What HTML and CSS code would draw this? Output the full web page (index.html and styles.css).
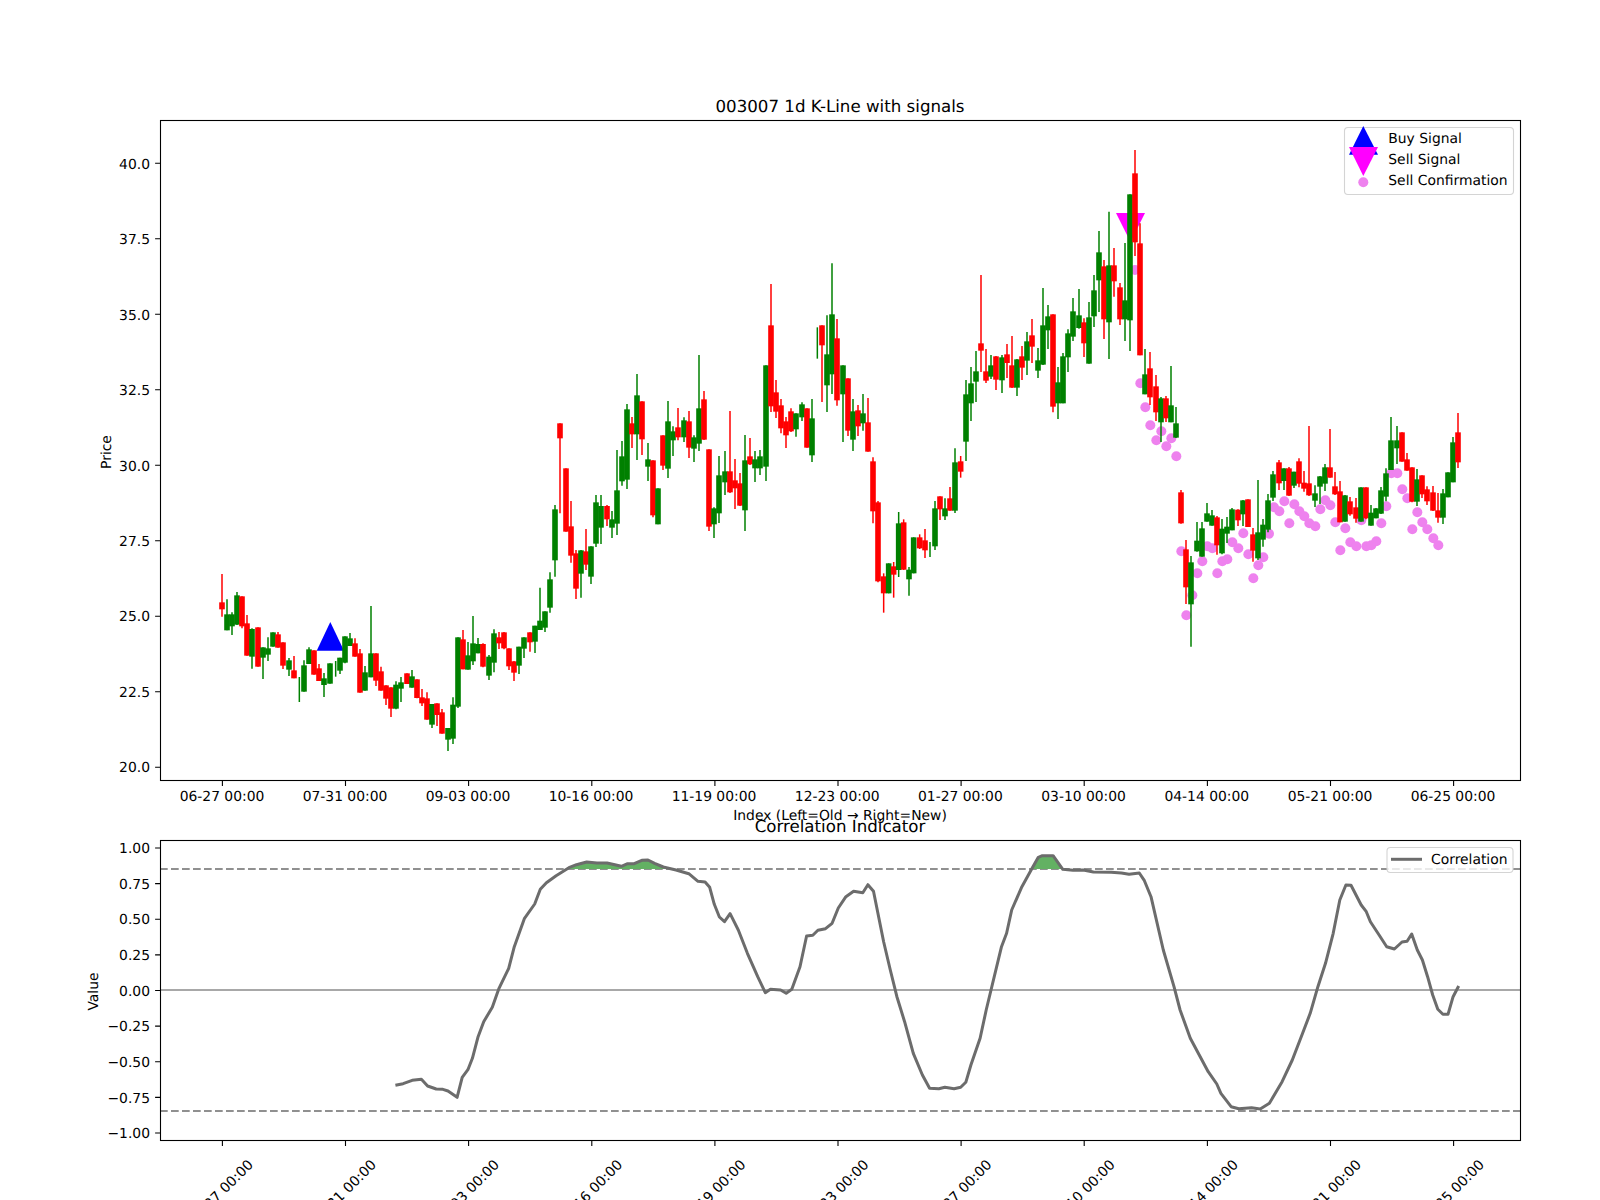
FILE: index.html
```html
<!DOCTYPE html>
<html lang="en">
<head>
<meta charset="utf-8">
<title>003007 1d K-Line with signals</title>
<link rel="stylesheet" href="styles.css">
</head>
<body>
<svg class="figure" id="figure" xmlns="http://www.w3.org/2000/svg" width="1600" height="1200" viewBox="0 0 1600 1200">
  <g id="main-markers">
    <polygon class="buy" points="330.3,622 316.7,650.7 344,650.7"/>
    <polygon class="sell" points="1116,213 1145,213 1130.5,242"/>
  </g>
  <g id="main-dots"></g>
  <g id="main-candles"></g>

  <rect class="frame" x="160.5" y="120.5" width="1360" height="660"/>
  <g class="ticks">
    <path d="M155.1 163.3h5M155.1 238.8h5M155.1 314.3h5M155.1 389.8h5M155.1 465.3h5M155.1 540.8h5M155.1 616.3h5M155.1 691.8h5M155.1 767.3h5"/>
    <path d="M222.4 781v5M345.5 781v5M468.6 781v5M591.8 781v5M714.9 781v5M838 781v5M961.1 781v5M1084.2 781v5M1207.4 781v5M1330.5 781v5M1453.6 781v5"/>
  </g>
  <g class="label end">
    <text x="150" y="168.8">40.0</text>
    <text x="150" y="244.2">37.5</text>
    <text x="150" y="319.7">35.0</text>
    <text x="150" y="395">32.5</text>
    <text x="150" y="470.5">30.0</text>
    <text x="150" y="546">27.5</text>
    <text x="150" y="621.3">25.0</text>
    <text x="150" y="696.8">22.5</text>
    <text x="150" y="772.3">20.0</text>
  </g>
  <g class="label middle">
    <text x="222" y="801">06-27 00:00</text>
    <text x="345" y="801">07-31 00:00</text>
    <text x="468" y="801">09-03 00:00</text>
    <text x="591" y="801">10-16 00:00</text>
    <text x="714" y="801">11-19 00:00</text>
    <text x="837.2" y="801">12-23 00:00</text>
    <text x="960.4" y="801">01-27 00:00</text>
    <text x="1083.6" y="801">03-10 00:00</text>
    <text x="1206.8" y="801">04-14 00:00</text>
    <text x="1330" y="801">05-21 00:00</text>
    <text x="1453" y="801">06-25 00:00</text>
    <text x="840" y="820">Index (Left=Old → Right=New)</text>
    <text x="111" y="452" transform="rotate(-90 111 452)">Price</text>
    <text x="98" y="991.5" transform="rotate(-90 98 991.5)">Value</text>
  </g>
  <g class="title middle">
    <text x="840" y="111.5">003007 1d K-Line with signals</text>
    <text x="840" y="832">Correlation Indicator</text>
  </g>

  <g class="legend">
    <rect class="legend-box" x="1344.5" y="127.5" width="169" height="67" rx="3.5"/>
    <polygon class="buy" points="1363.3,126 1349,154.7 1378,154.7"/>
    <polygon class="sell" points="1349,147 1378,147 1363.3,176"/>
    <circle class="dot" cx="1363.3" cy="182.3" r="5"/>
    <g class="label">
      <text x="1388.3" y="143.3">Buy Signal</text>
      <text x="1388.3" y="164.3">Sell Signal</text>
      <text x="1388.3" y="185.3">Sell Confirmation</text>
    </g>
  </g>

  <line class="zero" x1="160" y1="990" x2="1520" y2="990"/>
  <line class="dash" x1="160" y1="869" x2="1520" y2="869"/>
  <line class="dash" x1="160" y1="1111" x2="1520" y2="1111"/>
  <g id="corr"></g>

  <rect class="frame" x="160.5" y="840.5" width="1360" height="300"/>
  <g class="ticks">
    <path d="M155.1 848h5M155.1 883.6h5M155.1 919.3h5M155.1 954.9h5M155.1 990.5h5M155.1 1026.1h5M155.1 1061.8h5M155.1 1097.4h5M155.1 1133h5"/>
    <path d="M222.4 1141v5M345.5 1141v5M468.6 1141v5M591.8 1141v5M714.9 1141v5M838 1141v5M961.1 1141v5M1084.2 1141v5M1207.4 1141v5M1330.5 1141v5M1453.6 1141v5"/>
  </g>
  <g class="label end">
    <text x="150" y="853">1.00</text>
    <text x="150" y="888.6">0.75</text>
    <text x="150" y="924.3">0.50</text>
    <text x="150" y="959.9">0.25</text>
    <text x="150" y="995.5">0.00</text>
    <text x="150" y="1031.1">−0.25</text>
    <text x="150" y="1067.2">−0.50</text>
    <text x="150" y="1103">−0.75</text>
    <text x="150" y="1138.2">−1.00</text>
  </g>
  <g class="label middle">
    <text x="220.4" y="1197" transform="rotate(-45 220.4 1192)">06-27 00:00</text>
    <text x="343.5" y="1197" transform="rotate(-45 343.5 1192)">07-31 00:00</text>
    <text x="466.6" y="1197" transform="rotate(-45 466.6 1192)">09-03 00:00</text>
    <text x="589.8" y="1197" transform="rotate(-45 589.8 1192)">10-16 00:00</text>
    <text x="712.9" y="1197" transform="rotate(-45 712.9 1192)">11-19 00:00</text>
    <text x="836" y="1197" transform="rotate(-45 836 1192)">12-23 00:00</text>
    <text x="959.1" y="1197" transform="rotate(-45 959.1 1192)">01-27 00:00</text>
    <text x="1082.2" y="1197" transform="rotate(-45 1082.2 1192)">03-10 00:00</text>
    <text x="1205.4" y="1197" transform="rotate(-45 1205.4 1192)">04-14 00:00</text>
    <text x="1328.5" y="1197" transform="rotate(-45 1328.5 1192)">05-21 00:00</text>
    <text x="1451.6" y="1197" transform="rotate(-45 1451.6 1192)">06-25 00:00</text>
  </g>

  <g class="legend">
    <rect class="legend-box" x="1387" y="847.5" width="126" height="25" rx="3.5"/>
    <line class="corr-line" x1="1391" y1="859.3" x2="1422" y2="859.3"/>
    <text class="label" x="1431" y="864.3">Correlation</text>
  </g>
</svg>
<script src="chart.js"></script>
</body>
</html>
```

FILE: styles.css
```css
html, body {
  margin: 0;
  padding: 0;
  background: #ffffff;
}

.figure {
  display: block;
  width: 1600px;
  height: 1200px;
  background: #ffffff;
}

.figure text {
  font-family: "DejaVu Sans", sans-serif;
  fill: #000000;
  text-rendering: geometricPrecision;
}

.label text,
text.label {
  font-size: 13.89px;
}

.title text {
  font-size: 16.67px;
}

.end text {
  text-anchor: end;
}

.middle text {
  text-anchor: middle;
}

.frame {
  fill: none;
  stroke: #000000;
  stroke-width: 1.1;
}

.ticks path {
  fill: none;
  stroke: #000000;
  stroke-width: 1.1;
}

.legend-box {
  fill: rgba(255, 255, 255, 0.8);
  stroke: #d4d4d4;
  stroke-width: 1.1;
}

.buy {
  fill: #0000ff;
}

.sell {
  fill: #ff00ff;
}

.dot {
  fill: #ee82ee;
}

.wick-r {
  stroke: #ff0000;
  stroke-width: 1.5;
}

.wick-g {
  stroke: #008000;
  stroke-width: 1.5;
}

.body-r {
  fill: #ff0000;
}

.body-g {
  fill: #008000;
}

.zero {
  stroke: #a8a8a8;
  stroke-width: 2.2;
}

.dash {
  stroke: #909090;
  stroke-width: 2;
  stroke-dasharray: 7.7 3.3;
}

.corr-line {
  fill: none;
  stroke: #6c6c6c;
  stroke-width: 3;
  stroke-linejoin: round;
}

.corr-fill {
  fill: #63b163;
}
```

FILE: chart.js
```js
(function () {
  var NS = "http://www.w3.org/2000/svg";

  function el(parent, name, cls, attrs) {
    var n = document.createElementNS(NS, name);
    if (cls) n.setAttribute("class", cls);
    for (var k in attrs) n.setAttribute(k, attrs[k]);
    parent.appendChild(n);
    return n;
  }

  // Candles: [x, colour, wickTop, bodyTop, bodyBottom, wickBottom], read in 3x crop coordinates.
  var groups = [
    { ox: 160, oy: 480, rows: [
      [186,"r",282,367,388,410],[201,"g",358,403,451,451],[216,"g",397,403,439,465],[231,"g",336,346,434,435],
      [246,"r",349,349,439,445],[261,"r",405,430,527,527],[276,"g",445,447,530,566],[294,"r",442,442,560,560],
      [309,"g",502,502,533,597],[324,"g",472,505,524,543],[339,"g",457,457,500,500],[354,"r",456,463,503,503],
      [369,"r",487,487,557,567],[387,"g",534,541,569,588],[402,"r",528,571,595,595],[418,"g",591,591,591,666],
      [432,"g",541,556,635,635],[447,"g",502,508,552,552],[462,"r",511,511,584,584],[477,"r",552,565,603,603],
      [492,"g",579,595,615,651],[510,"g",550,550,611,611],[527,"g",543,543,543,590],[540,"g",533,533,572,582],
      [555,"g",469,469,548,550],[570,"g",459,475,498,498],[585,"r",475,490,530,530],[600,"r",507,520,638,638],
      [615,"g",558,577,632,632],[633,"g",378,520,592,592],[648,"r",520,520,602,618],[663,"r",560,574,632,632],
      [678,"r",616,616,656,675],[693,"r",622,622,686,711],[708,"g",604,614,686,688],[723,"g",591,607,626,666],
      [741,"r",580,580,612,612],[756,"g",570,589,623,623],[771,"r",598,598,654,655],[786,"r",627,652,670,678],
      [801,"r",637,655,719,719],[816,"g",672,672,734,744],[831,"r",670,670,705,738],[846,"r",687,697,761,761],
      [864,"g",744,744,779,813],[879,"g",652,674,776,792],[894,"g",472,472,680,684],[909,"r",450,478,568,568],
      [924,"g",486,526,569,569],[939,"g",408,490,544,555],[954,"g",474,492,520,520],[969,"r",490,492,560,562],
      [987,"g",525,530,587,600],[1002,"g",448,460,548,577],[1017,"r",456,472,490,507],[1032,"r",456,457,505,508],
      [1047,"r",505,505,559,570],[1062,"r",543,544,578,603],[1077,"g",500,500,557,582],[1092,"g",472,472,506,534],
      [1110,"r",457,457,487,515],[1125,"g",437,437,485,519],[1140,"g",323,422,450,450],[1155,"g",394,394,443,456],
      [1170,"g",277,298,383,398],[1185,"g",75,88,241,290]
    ]},
    { ox: 540, oy: 250, rows: [[60,"r",520,520,565,790],[78,"r",655,655,845,845]] },
    { ox: 540, oy: 440, rows: [
      [93,"r",183,259,347,368],[108,"r",330,340,446,477],[123,"g",330,331,401,473],[138,"r",267,334,374,390],
      [153,"g",319,319,410,432],[168,"g",165,187,311,321],[183,"g",165,198,263,312],[201,"r",195,198,238,258],
      [216,"g",213,238,263,294],[231,"g",30,151,251,285],[246,"g",3,49,124,137]
    ]},
    { ox: 540, oy: 250, rows: [
      [261,"g",462,478,689,717],[276,"r",501,520,553,594],[291,"g",372,436,553,630],[306,"r",454,454,568,615],
      [324,"g",579,628,650,693],[339,"r",631,631,796,802],[354,"g",715,715,823,823],[369,"r",556,556,647,660],
      [384,"g",453,514,656,684],[399,"g",529,544,571,618],[414,"r",474,532,562,571],[432,"g",502,511,562,576],
      [447,"r",483,514,593,624],[462,"g",556,562,596,636],[477,"g",315,475,581,603],[492,"r",423,448,569,570],
      [507,"r",598,598,830,843],[522,"g",772,775,823,864],[537,"g",618,676,790,819],[555,"g",603,664,697,735],
      [570,"r",483,664,727,729],[585,"r",627,691,715,777],[600,"r",669,700,767,768],[615,"g",555,631,781,843],
      [630,"r",564,619,643,645],[645,"g",603,628,655,696],[660,"g",600,619,655,675],[678,"g",346,346,650,693],
      [693,"r",102,226,469,486],[708,"r",390,427,485,504],[723,"r",447,466,535,550],[738,"r",501,514,556,594],
      [753,"r",475,484,544,546],[768,"g",490,490,538,560],[786,"g",457,463,502,513],[801,"r",475,475,593,593],
      [816,"g",447,505,616,636],[832,"g",232,232,232,326],[846,"r",226,226,286,456],[861,"g",196,313,406,486],
      [876,"g",40,193,373,432],[891,"r",207,265,451,467],[909,"g",346,346,433,576],[924,"r",385,385,542,558],
      [939,"g",447,484,569,603],[954,"r",465,481,529,558],[969,"g",432,490,520,542],[984,"r",444,517,605,605]
    ]},
    { ox: 840, oy: 440, rows: [
      [99,"r",52,64,214,250],[114,"r",183,187,424,427],[131,"r",400,409,460,518],[146,"g",370,370,460,460],
      [161,"r",366,379,404,473],[176,"g",216,250,390,411],[191,"r",238,247,389,390],[207,"g",381,389,418,467],
      [221,"g",292,292,400,400],[239,"r",283,292,325,327],[255,"r",267,301,331,354],[270,"g",306,306,306,351],
      [285,"g",183,205,319,330],[300,"r",169,169,208,240],[315,"g",175,205,229,240],[330,"r",141,175,212,212],
      [345,"g",25,67,212,219],[362,"r",48,64,95,113]
    ]},
    { ox: 840, oy: 250, rows: [
      [378,"g",390,433,575,633],[393,"g",351,400,460,513],[408,"g",303,364,395,456],[423,"r",75,280,302,366],
      [438,"r",297,364,392,399],[453,"g",315,346,380,387],[468,"r",318,319,389,420],[486,"g",315,322,391,429],
      [501,"r",282,313,339,384],[516,"r",258,346,413,414],[531,"g",327,328,413,438],[546,"r",288,319,353,390],
      [561,"g",246,274,332,375],[576,"r",207,256,290,339],[594,"g",294,331,362,384],[609,"g",114,226,344,345],
      [624,"g",165,199,241,297],[639,"r",193,193,470,487],[654,"g",351,397,460,507],[669,"g",309,319,460,460],
      [684,"g",238,250,322,366],[699,"g",144,184,260,273],[717,"g",117,196,234,236],[732,"r",205,217,280,321],
      [747,"g",156,202,341,341],[762,"g",75,121,199,231]
    ]},
    { ox: 1050, oy: 130, rows: [
      [147,"g",303,367,451,546],[162,"r",390,409,568,627],[177,"g",245,406,577,687],[192,"r",354,406,454,500],
      [210,"r",459,472,568,585],[225,"g",339,511,568,633],[240,"g",193,193,571,663],[255,"r",60,130,337,378],
      [270,"r",280,340,676,676]
    ]},
    { ox: 840, oy: 250, rows: [
      [915,"g",297,373,433,433],[930,"r",306,355,442,465],[948,"r",375,409,487,513],[963,"g",441,445,517,576],
      [978,"r",438,445,505,516],[993,"g",348,466,517,517],[1008,"g",471,520,563,564]
    ]},
    { ox: 1100, oy: 370, rows: [
      [243,"r",360,367,460,461],[258,"r",510,538,652,702],[273,"g",558,577,703,830],[291,"g",456,512,544,545],
      [306,"g",456,475,560,560],[321,"g",399,430,455,455],[336,"g",420,436,467,467],[351,"r",438,442,526,554],
      [366,"g",447,476,550,553],[381,"g",441,470,491,519],[396,"g",414,418,481,481],[414,"r",418,419,451,468],
      [429,"g",390,391,433,468],[444,"r",388,388,471,471],[459,"r",474,493,542,575],[474,"g",330,487,565,570],
      [489,"g",447,464,509,530],[504,"g",372,391,479,487],[519,"g",303,313,383,393],[537,"r",270,277,340,360],
      [552,"g",295,295,333,360],[567,"r",291,295,377,378],[582,"g",305,305,347,354],[597,"r",265,274,341,352],
      [612,"r",303,338,356,365],[627,"r",168,340,376,378],[645,"g",346,370,392,411],[660,"g",318,319,350,402],
      [675,"g",282,292,341,363],[690,"r",177,292,323,323],[705,"r",306,349,373,375],[720,"r",333,364,457,457],
      [735,"g",375,376,455,455],[750,"r",381,394,433,437],[768,"r",384,412,446,458],[783,"g",352,352,455,455],
      [798,"r",352,352,445,448],[813,"g",405,428,467,467],[828,"g",414,415,445,445],[843,"g",351,361,431,432],
      [858,"g",295,310,380,394],[873,"g",141,211,300,300],[891,"g",168,211,235,282],[906,"r",187,187,275,275],
      [921,"r",249,268,302,302],[936,"r",292,292,395,397],[951,"g",297,328,395,408],[966,"r",316,316,373,384],
      [981,"r",349,358,394,405],[999,"r",348,367,422,423],[1014,"r",369,421,443,458],[1029,"g",357,370,443,462],
      [1044,"g",307,307,382,382],[1059,"g",201,217,337,337],[1074,"r",129,187,277,294]
    ]}
  ];

  var candles = document.getElementById("main-candles");
  groups.forEach(function (g) {
    g.rows.forEach(function (r) {
      var x = g.ox + r[0] / 3;
      var yy = function (v) { return g.oy + v / 3; };
      el(candles, "line", "wick-" + r[1], { x1: x, x2: x, y1: yy(r[2]), y2: yy(r[5]) });
      if (r[4] > r[3]) {
        el(candles, "rect", "body-" + r[1], { x: x - 2.8, y: yy(r[3]), width: 5.6, height: (r[4] - r[3]) / 3 });
      }
    });
  });

  // Sell confirmation dots, crop (1100, 370) at 3x.
  var dotPts = [
    [121,40],[136,112],[151,166],[184,184],[169,211],[214,205],[199,229],[229,259],[244,544],[259,736],
    [277,676],[292,610],[307,574],[322,529],[337,535],[352,610],[367,574],[382,568],[397,517],[415,535],
    [430,490],[445,553],[460,625],[475,586],[490,562],[507,491],[522,412],[538,424],[553,394],[568,460],
    [583,403],[598,424],[613,439],[628,460],[646,469],[661,418],[676,391],[691,406],[706,457],[721,541],
    [736,475],[751,517],[769,529],[784,451],[799,529],[814,526],[829,514],[844,460],[859,409],[874,310],
    [892,310],[907,358],[922,385],[937,478],[952,427],[967,457],[982,478],[1000,505],[1015,526],[105,-300]
  ];
  var dots = document.getElementById("main-dots");
  dotPts.forEach(function (p) {
    el(dots, "circle", "dot", { cx: 1100 + p[0] / 3, cy: 370 + p[1] / 3, r: 5 });
  });

  // Correlation line, crops starting at x=0 and x=800, y=770 (1.96x horizontally, 3x vertically).
  var left = [
    [775,946],[790,941],[808,931],[826,928],[838,948],[855,957],[868,958],[878,963],[896,982],[906,922],
    [917,899],[926,865],[937,800],[948,755],[965,712],[978,655],[997,595],[1008,530],[1028,445],[1048,402],
    [1059,358],[1071,338],[1090,317],[1115,293],[1130,284],[1150,276],[1170,279],[1190,279],[1218,289],
    [1230,281],[1243,281],[1258,271],[1270,270],[1283,280],[1300,291],[1325,300],[1350,311],[1368,334],
    [1382,336],[1391,352],[1400,403],[1410,441],[1420,455],[1431,431],[1447,480],[1465,550],[1485,620],
    [1500,668],[1510,658],[1530,660],[1541,670],[1552,658]
  ];
  var right = [
    [0,590],[13,498],[25,496],[35,481],[50,476],[63,460],[75,414],[90,380],[105,364],[123,368],[133,344],
    [144,364],[164,516],[177,600],[190,680],[205,755],[222,850],[240,915],[254,955],[272,956],[284,952],
    [302,956],[315,952],[325,937],[335,885],[353,805],[365,720],[395,530],[405,490],[415,420],[435,350],
    [455,295],[467,262],[475,257],[496,257],[515,298],[535,301],[555,300],[575,306],[610,307],[630,309],
    [645,313],[665,309],[675,332],[688,380],[712,540],[733,650],[745,720],[765,805],[800,905],[817,942],
    [825,970],[845,1010],[860,1016],[885,1013],[902,1017],[920,1000],[945,935],[965,870],[985,790],
    [1000,730],[1015,650],[1030,580],[1045,490],[1058,390],[1070,345],[1080,346],[1100,405],[1110,425],
    [1118,455],[1135,495],[1150,530],[1165,537],[1180,516],[1190,514],[1199,492],[1210,540],[1220,570],
    [1230,620],[1240,675],[1250,718],[1260,733],[1270,733],[1280,680],[1291,648]
  ];
  function mapLeft(p) { return (p[0] / 1.96).toFixed(1) + "," + (770 + p[1] / 3).toFixed(1); }
  function mapRight(p) { return (800 + p[0] / 1.96).toFixed(1) + "," + (770 + p[1] / 3).toFixed(1); }

  var corr = document.getElementById("corr");
  var fillA = [[1110,297],[1115,293],[1130,284],[1150,276],[1170,279],[1190,279],[1218,289],[1230,281],
               [1243,281],[1258,271],[1270,270],[1283,280],[1300,291],[1312,297]].map(mapLeft).join(" ");
  var fillB = [[455,297],[467,262],[475,257],[496,257],[514,297]].map(mapRight).join(" ");
  el(corr, "polygon", "corr-fill", { points: fillA });
  el(corr, "polygon", "corr-fill", { points: fillB });
  el(corr, "polyline", "corr-line", { points: left.map(mapLeft).concat(right.map(mapRight)).join(" ") });
})();
```
